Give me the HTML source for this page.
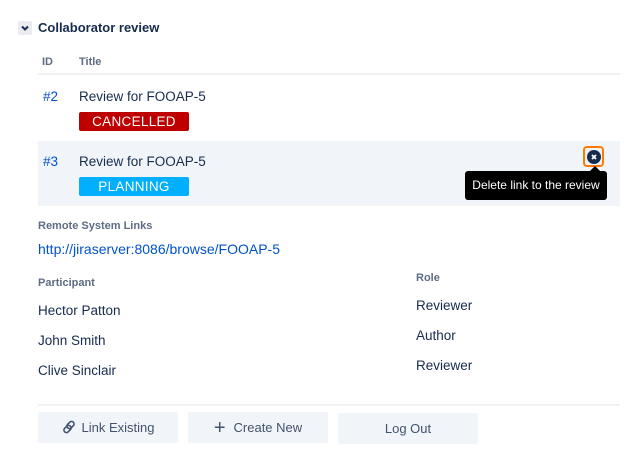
<!DOCTYPE html>
<html><head><style>
body{margin:0;width:639px;height:460px;background:#fff;font-family:"Liberation Sans",sans-serif;color:#172b4d;position:relative;overflow:hidden}
.a{position:absolute;white-space:nowrap}
.lbl{font-size:11px;font-weight:bold;color:#5e6c84}
.t{font-size:13.5px;color:#172b4d}
.lnk{color:#0052cc}
.badge{position:absolute;width:110px;height:19px;border-radius:2px;color:#fff;font-size:13.5px;text-align:center;line-height:19px;letter-spacing:.3px}
.btn{position:absolute;top:412px;width:140px;height:31px;background:#f1f5f9;border-radius:2px;font-size:13px;color:#42526e;line-height:31px;text-align:center}
</style></head><body>
<div class="a" style="left:18px;top:21px;width:14px;height:14px;background:#ebecf0;border-radius:2px"></div>
<svg class="a" style="left:20px;top:23px" width="10" height="10"><path d="M2 3.5 L5 6.5 L8 3.5" stroke="#172b4d" stroke-width="2" fill="none"/></svg>
<div class="a" style="left:38px;top:20px;font-size:13px;font-weight:bold">Collaborator review</div>
<div class="a lbl" style="left:42px;top:56px">ID</div>
<div class="a lbl" style="left:79px;top:56px">Title</div>
<div class="a" style="left:38px;top:73px;width:582px;height:2px;background:#f0f1f3"></div>
<div class="a t lnk" style="left:43px;top:89px">#2</div>
<div class="a t" style="left:79px;top:89px">Review for FOOAP-5</div>
<div class="badge" style="left:79px;top:112px;background:#bf0000">CANCELLED</div>
<div class="a" style="left:38px;top:141px;width:582px;height:65px;background:#f1f5f9"></div>
<div class="a t lnk" style="left:43px;top:154px">#3</div>
<div class="a t" style="left:79px;top:154px">Review for FOOAP-5</div>
<div class="badge" style="left:79px;top:177px;background:#00b0ff">PLANNING</div>
<div class="a" style="left:583px;top:146px;width:21px;height:21px;border:2px solid #ff7a00;border-radius:4px;box-sizing:border-box"></div>
<div class="a" style="left:586.5px;top:149.5px;width:14px;height:14px;border-radius:50%;background:#172b4d"></div>
<svg class="a" style="left:586.5px;top:149.5px" width="14" height="14"><path d="M5 5L9 9M9 5L5 9" stroke="#fff" stroke-width="1.8"/></svg>
<div class="a" style="left:590px;top:166px;width:0;height:0;border:5px solid transparent;border-bottom-color:#000;border-top:0"></div>
<div class="a" style="left:465px;top:171px;width:142px;height:29px;background:#000;border-radius:3px;color:#fff;font-size:12px;line-height:29px;text-align:center">Delete link to the review</div>
<div class="a lbl" style="left:38px;top:220px">Remote System Links</div>
<div class="a t lnk" style="left:38px;top:241px;font-size:14px">http://jiraserver:8086/browse/FOOAP-5</div>
<div class="a lbl" style="left:38px;top:277px">Participant</div>
<div class="a lbl" style="left:416px;top:272px">Role</div>
<div class="a t" style="left:38px;top:303px">Hector Patton</div>
<div class="a t" style="left:38px;top:333px">John Smith</div>
<div class="a t" style="left:38px;top:363px">Clive Sinclair</div>
<div class="a t" style="left:416px;top:298px">Reviewer</div>
<div class="a t" style="left:416px;top:328px">Author</div>
<div class="a t" style="left:416px;top:358px">Reviewer</div>
<div class="a" style="left:38px;top:404px;width:582px;height:2px;background:#f0f1f3"></div>
<div class="btn" style="left:38px"><svg style="vertical-align:-2px;margin-right:6px" width="14" height="14"><g stroke="#42526e" stroke-width="1.6" fill="none"><rect x="6" y="1" width="5" height="8" rx="2.5" transform="rotate(45 8.5 5)"/><rect x="3" y="5" width="5" height="8" rx="2.5" transform="rotate(45 5.5 9)"/></g></svg>Link Existing</div>
<div class="btn" style="left:188px"><span style="font-size:20px;vertical-align:-2px;margin-right:8px">+</span>Create New</div>
<div class="btn" style="left:338px;top:413px">Log Out</div>
</body></html>
